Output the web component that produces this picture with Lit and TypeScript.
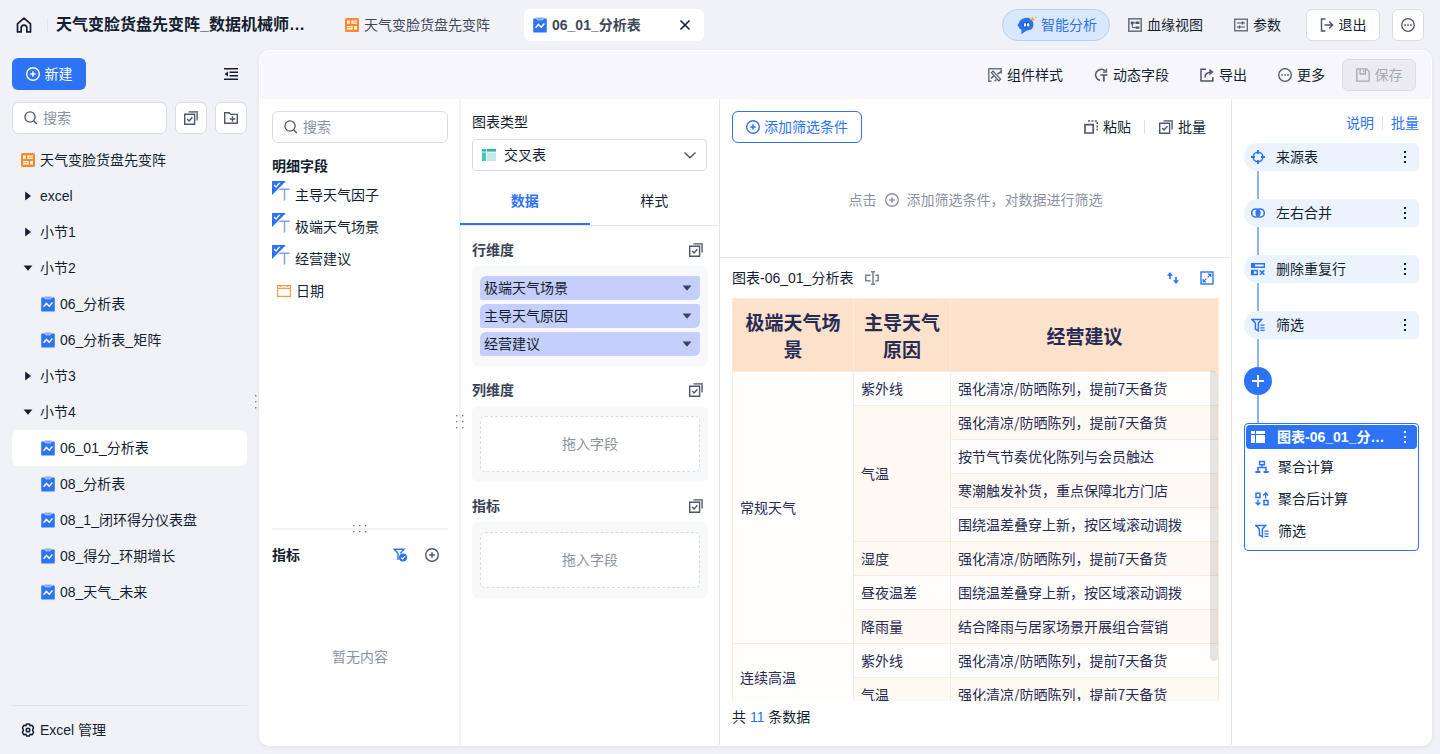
import { LitElement, html, css, svg, nothing } from "lit";
import { customElement, state } from "lit/decorators.js";
import { classMap } from "lit/directives/class-map.js";

const shapes: Record<string, unknown> = {
  home: svg`<path d="M1.3 6 L7 1 L12.7 6 V13 H9.5 V9.6 A2.5 2.5 0 0 0 4.5 9.6 V13 H1.3 Z" fill="none" stroke="currentColor" stroke-width="1.5"/>`,
  plusCircle: svg`<circle cx="7" cy="7" r="6.3" fill="none" stroke="currentColor" stroke-width="1.4"/><path d="M7 4.2V9.8M4.2 7H9.8" stroke="currentColor" stroke-width="1.5"/>`,
  collapse: svg`<path d="M0 1.7H14M5.5 5.3H14M5.5 8.7H14M0 12.3H14" stroke="currentColor" stroke-width="1.6"/><path d="M0.6 7 L4 4.4V9.6Z" fill="currentColor"/>`,
  search: svg`<circle cx="6" cy="6" r="5.1" fill="none" stroke="currentColor" stroke-width="1.3"/><path d="M9.7 9.7L12.8 13" stroke="currentColor" stroke-width="1.4"/>`,
  batch: svg`<path d="M0.7 3.2H10.6V13.3H0.7Z" fill="none" stroke="currentColor" stroke-width="1.4"/><path d="M3.2 8L5.1 10L8.4 6.2" fill="none" stroke="currentColor" stroke-width="1.4"/><path d="M4.5 0.9H13.1V9.5" fill="none" stroke="currentColor" stroke-width="1.8" opacity="0.75"/>`,
  folderPlus: svg`<path d="M0.7 1.7H5.2L6.8 3.4H13.3V12.3H0.7Z" fill="none" stroke="currentColor" stroke-width="1.4"/><path d="M8.5 5.2V10.8M5.7 8H11.3" stroke="currentColor" stroke-width="1.4"/>`,
  book: svg`<rect width="14" height="14" rx="1.5" fill="#fc8a2b"/><path d="M2 2.5H4.8V5.8H2ZM6.4 2.5H12V5.8H6.4ZM2 8H7.6V11.5H2ZM9.2 8H12V11.5H9.2Z" fill="#fff"/><path d="M7.6 4.1H12M2 9.7H6.4" stroke="#fc8a2b" stroke-width="0.9"/>`,
  chartDoc: svg`<rect x="0" y="1.5" width="14" height="14" rx="1" fill="#2d73f5"/><path d="M0.3 2V15.5M13.7 2V15.5" stroke="#8fb4fa" stroke-width="0.6"/><path d="M3.6 0.6H10.4L9.6 3H4.4Z" fill="#79a5f8" stroke="#c4d8fc" stroke-width="0.7"/><path d="M2.6 10.8L5.4 7.4L8.2 10.2L11.4 6.6" fill="none" stroke="#fff" stroke-width="1.5"/>`,
  caretRight: svg`<path d="M4.2 2.6L10 7L4.2 11.4Z" fill="currentColor"/>`,
  caretDown: svg`<path d="M2.6 4.4H11.4L7 9.8Z" fill="currentColor"/>`,
  gear: svg`<path d="M5.6 1H8.4L9 2.7L11 2.3L12.6 4.6L11.6 7L12.6 9.4L11 11.7L9 11.3L8.4 13H5.6L5 11.3L3 11.7L1.4 9.4L2.4 7L1.4 4.6L3 2.3L5 2.7Z" fill="none" stroke="currentColor" stroke-width="1.5" stroke-linejoin="round"/><circle cx="7" cy="7" r="1.8" fill="none" stroke="currentColor" stroke-width="1.5"/>`,
  close: svg`<path d="M2.5 2.5L11.5 11.5M11.5 2.5L2.5 11.5" stroke="currentColor" stroke-width="1.6"/>`,
  lineage: svg`<rect x="0.8" y="0.8" width="12.4" height="12.4" fill="none" stroke="currentColor" stroke-width="1.6" opacity="0.8"/><path d="M2.8 3.6H5.6V6.2H2.8ZM7.8 3.6H11.4V6H7.8ZM7.8 8.4H11.4V10.8H7.8Z" fill="currentColor"/><path d="M5 4.9H8M4.3 5V9.6H8" fill="none" stroke="currentColor" stroke-width="1"/>`,
  params: svg`<rect x="0.7" y="1.2" width="12.6" height="11.6" fill="none" stroke="currentColor" stroke-width="1.4" opacity="0.85"/><path d="M3 5H11M3 9H11" stroke="currentColor" stroke-width="1.2"/><path d="M8.5 3.5V6.5M5.5 7.5V10.5" stroke="currentColor" stroke-width="1.5"/>`,
  exit: svg`<path d="M5.5 1H1.5V13H5.5" fill="none" stroke="currentColor" stroke-width="1.4"/><path d="M4.5 7H12.5M9.2 3.5L12.7 7L9.2 10.5" fill="none" stroke="currentColor" stroke-width="1.4"/>`,
  more: svg`<circle cx="7" cy="7" r="6.3" fill="none" stroke="currentColor" stroke-width="1.3"/><path d="M3.2 6.3H4.8V7.7H3.2ZM6.2 6.3H7.8V7.7H6.2ZM9.2 6.3H10.8V7.7H9.2Z" fill="currentColor"/>`,
  style: svg`<path d="M13.2 5.5V0.8H0.8V13.2H3.6" fill="none" stroke="currentColor" stroke-width="1.5" opacity="0.8"/><path d="M3.4 4.6L5 3L12.6 11.2L10.8 12.8Z" fill="none" stroke="currentColor" stroke-width="1.2"/><path d="M3 10.6L6 7.6M9.4 6.2L13 3.6M6.6 13.2L8.4 11.6" stroke="currentColor" stroke-width="1.4"/>`,
  dynamic: svg`<path d="M11.2 3A5.6 5.6 0 1 0 6 12.4" fill="none" stroke="currentColor" stroke-width="1.5"/><path d="M12.4 0.8V4.2H8.8" fill="none" stroke="currentColor" stroke-width="1.3"/><path d="M6.4 7H13.4M9.9 7V13.6" stroke="currentColor" stroke-width="1.7"/>`,
  exportIcon: svg`<path d="M6 1.2H1V13H12.8V9" fill="none" stroke="currentColor" stroke-width="1.5"/><path d="M5 9.5C5 6 7 4.2 11 4.2" fill="none" stroke="currentColor" stroke-width="1.6"/><path d="M9.4 0.8L13.5 4.1L9.4 7.4Z" fill="currentColor"/>`,
  save: svg`<path d="M0.8 0.8H10.4L13.2 3.6V13.2H0.8Z" fill="none" stroke="currentColor" stroke-width="1.3"/><path d="M4 1V6H9.5V1M7.6 2.2V4.6" fill="none" stroke="currentColor" stroke-width="1.3"/>`,
  cross: svg`<rect x="0" y="1" width="14" height="2.6" fill="#27b5ae"/><rect x="0" y="4.4" width="4" height="8.6" fill="#45c5be"/><rect x="4.8" y="4.4" width="9.2" height="8.6" fill="#bfece9"/><path d="M4.4 1V13" stroke="#fff" stroke-width="0.8"/>`,
  chevron: svg`<path d="M1.5 4.5L7 9.8L12.5 4.5" fill="none" stroke="currentColor" stroke-width="1.4"/>`,
  calendar: svg`<path d="M0.6 1.6H13.4V12.4H0.6Z" fill="none" stroke="#fa9a48" stroke-width="1.2"/><path d="M0.6 4.4H13.4M3.5 1V3M10.5 1V3" stroke="#fa9a48" stroke-width="1.2"/>`,
  paste: svg`<path d="M1 4.6H9.2V13H1Z" fill="none" stroke="currentColor" stroke-width="1.7"/><path d="M4 1H13.2V10.5" fill="none" stroke="currentColor" stroke-width="1.5" stroke-dasharray="2 1.4"/>`,
  rename: svg`<path d="M5.5 4.2H0.8V9.8H5.5M10.5 4.2H13.2V9.8H10.5" fill="none" stroke="currentColor" stroke-width="1.5"/><path d="M8 1V13M6 0.8H10M6 13.2H10" stroke="currentColor" stroke-width="1.5"/>`,
  sort: svg`<path d="M4 2.5V8M10 6V11" stroke="currentColor" stroke-width="1.6"/><path d="M1 4.8L4 1L7 4.8ZM7 9.2L10 13L13 9.2Z" fill="currentColor"/>`,
  expand: svg`<rect x="1" y="1" width="12" height="12" fill="none" stroke="currentColor" stroke-width="1.4"/><path d="M7.6 6.4L10.6 3.4M8 3.2H10.8V6M6.4 7.6L3.4 10.6M3.2 8V10.8H6" fill="none" stroke="currentColor" stroke-width="1.2"/>`,
  target: svg`<circle cx="7" cy="7" r="4.8" fill="none" stroke="currentColor" stroke-width="1.5"/><path d="M7 0V4M7 10V14M0 7H4M10 7H14" stroke="currentColor" stroke-width="1.9"/>`,
  merge: svg`<circle cx="4.8" cy="7" r="4.1" fill="none" stroke="currentColor" stroke-width="1.5"/><circle cx="9.2" cy="7" r="4.1" fill="none" stroke="currentColor" stroke-width="1.5"/><path d="M7 3.7A4 4 0 0 1 7 10.3A4 4 0 0 1 7 3.7Z" fill="currentColor"/>`,
  dedupe: svg`<path d="M0.7 1.7H13.3V5.3H0.7ZM0.7 8.6H6.3V12.4H0.7Z" fill="none" stroke="currentColor" stroke-width="1.5"/><path d="M0.6 1.6H4V5.2H0.6ZM0.6 8.6H3V12.4H0.6Z" fill="currentColor"/><path d="M9 8.4L13.3 12.8M13.3 8.4L9 12.8" stroke="currentColor" stroke-width="1.6"/>`,
  filter: svg`<path d="M0.8 1.4H10.6L7.4 5V12.8L4.4 11V5Z" fill="none" stroke="currentColor" stroke-width="1.5"/><path d="M9.4 7.2H13.6M9.4 9.8H13.6M9.4 12.4H13.6" stroke="currentColor" stroke-width="1.3"/>`,
  filterCheck: svg`<path d="M5 12V5.2L1.2 1.2H11L7.4 5.2" fill="none" stroke="currentColor" stroke-width="1.4"/><circle cx="10" cy="9.6" r="4" fill="currentColor"/><path d="M8.2 9.6L9.6 11L12 8.4" fill="none" stroke="#fff" stroke-width="1.1"/>`,
  plus: svg`<path d="M7 1V13M1 7H13" stroke="currentColor" stroke-width="1.8"/>`,
  kebab: svg`<path d="M6 1H8V3H6ZM6 6H8V8H6ZM6 11H8V13H6Z" fill="currentColor"/>`,
  table: svg`<path d="M0 1H4V4H0ZM5 1H14V4H5ZM0 5H4V13H0ZM5 5H14V13H5Z" fill="currentColor"/>`,
  aggregate: svg`<path d="M4.6 1.4H9.4V4.8H4.6ZM7 4.8V7.4M3 11V7.4H11V11" fill="none" stroke="currentColor" stroke-width="1.5"/><path d="M0.4 12H5.4M8.6 12H13.6" stroke="currentColor" stroke-width="2"/>`,
  aggregateAfter: svg`<path d="M1 1.2H5V5.4H1ZM9 8.6H13V12.8H9Z" fill="none" stroke="currentColor" stroke-width="1.5"/><path d="M10.7 6.6V1.2M8.2 3.6L10.7 1L13.2 3.6M3 7.6V12.6M0.6 10.4L3 12.8L5.4 10.4" fill="none" stroke="currentColor" stroke-width="1.4"/>`,
};

const icon = (name: string, size = 14) => html`<svg class="icon" width=${size} height=${name === "chartDoc" ? 16 : size}
  viewBox=${name === "chartDoc" ? "0 0 14 16" : "0 0 14 14"} aria-hidden="true">${shapes[name]}</svg>`;

const robot = html`<svg class="icon" width="20" height="18" viewBox="0 0 20 18" aria-hidden="true">
  <path d="M8 2C12.5 1.2 16.4 3.8 16.4 8.4C16.4 12.4 14 14 11 14.2C8.5 15 6.5 17 4 18C4.6 16.4 4.6 15 4.2 13.6C2.6 13 1.8 12 2 10.8C0.4 10.6 0 8.4 1.6 7.8C2 4.6 4.6 2.6 8 2Z" fill="#2b74f0"/>
  <ellipse cx="9.4" cy="8.8" rx="3.9" ry="2.8" fill="#1f57bd"/>
  <ellipse cx="8" cy="8.8" rx="1.2" ry="1.9" fill="#fff"/><ellipse cx="11.2" cy="8.8" rx="1.2" ry="1.9" fill="#fff"/>
  <path d="M15.4 0.6L16.3 2.6L18.2 3.4L16.3 4.2L15.4 6.2L14.6 4.2L12.7 3.4L14.6 2.6Z" fill="#f9a825"/>
  <path d="M18.8 0L19.2 1L20 1.3L19.2 1.7L18.8 2.6L18.4 1.7L17.6 1.3L18.4 1Z" fill="#f9a825"/></svg>`;

const checkedText = html`<svg class="icon" width="18" height="20" viewBox="0 0 18 20" aria-hidden="true">
  <path d="M0 0H14L0 14Z" fill="#2d73f5"/><path d="M2 4L4 6L7.6 1.8" fill="none" stroke="#fff" stroke-width="1.3"/>
  <path d="M7.5 8.2H17.5M12.5 8V19.5" stroke="#84a3dc" stroke-width="1.5"/></svg>`;

interface TreeNode { label: string; kind: "book" | "closed" | "open" | "chart"; }

const tree: TreeNode[] = [
  { label: "天气变脸货盘先变阵", kind: "book" },
  { label: "excel", kind: "closed" },
  { label: "小节1", kind: "closed" },
  { label: "小节2", kind: "open" },
  { label: "06_分析表", kind: "chart" },
  { label: "06_分析表_矩阵", kind: "chart" },
  { label: "小节3", kind: "closed" },
  { label: "小节4", kind: "open" },
  { label: "06_01_分析表", kind: "chart" },
  { label: "08_分析表", kind: "chart" },
  { label: "08_1_闭环得分仪表盘", kind: "chart" },
  { label: "08_得分_环期增长", kind: "chart" },
  { label: "08_天气_未来", kind: "chart" },
];
const treeIcon = { book: "book", closed: "caretRight", open: "caretDown", chart: "chartDoc" };

type Cell = [text: string, span?: number];
const rows: Cell[][] = [
  [["常规天气", 8], ["紫外线"], ["强化清凉/防晒陈列，提前7天备货"]],
  [["气温", 4], ["强化清凉/防晒陈列，提前7天备货"]],
  [["按节气节奏优化陈列与会员触达"]],
  [["寒潮触发补货，重点保障北方门店"]],
  [["围绕温差叠穿上新，按区域滚动调拨"]],
  [["湿度"], ["强化清凉/防晒陈列，提前7天备货"]],
  [["昼夜温差"], ["围绕温差叠穿上新，按区域滚动调拨"]],
  [["降雨量"], ["结合降雨与居家场景开展组合营销"]],
  [["连续高温", 2], ["紫外线"], ["强化清凉/防晒陈列，提前7天备货"]],
  [["气温"], ["强化清凉/防晒陈列，提前7天备货"]],
];

const steps = [
  { icon: "target", label: "来源表" },
  { icon: "merge", label: "左右合并" },
  { icon: "dedupe", label: "删除重复行" },
  { icon: "filter", label: "筛选" },
];

@customElement("app-root")
export class AppRoot extends LitElement {
  @state() private selected = "06_01_分析表";
  @state() private tab = "数据";

  static styles = css`
    :host {
      display: flex; flex-direction: column; height: 100vh; overflow: hidden;
      background: #f1f2f7; color: #141e31;
      font: 14px/22px "Liberation Sans", "Noto Sans CJK SC", sans-serif;
    }
    *, *::before, *::after { box-sizing: border-box; }
    button, input, select { font: inherit; color: inherit; }
    button { display: inline-flex; align-items: center; background: none; border: 0; padding: 0; white-space: nowrap; cursor: pointer; }
    ul { list-style: none; margin: 0; padding: 0; }
    h1, h2, p { margin: 0; font-size: inherit; }
    a { color: #2d73f5; text-decoration: none; }
    .icon { display: block; flex: none; }
    .grey { color: #4e5669; }
    .blue { color: #2d73f5; }
    .grow { flex: 1; }
    .link { gap: 5px; }
    .link .icon { color: #4e5669; }
    .box { height: 32px; background: #fff; border: 1px solid #d9dde5; border-radius: 6px; justify-content: center; color: #4e5669; flex: none; }
    .square { width: 32px; }
    .labelled { width: 74px; gap: 5px; color: #141e31; }
    .labelled .icon { color: #4e5669; }
    .rule { width: 1px; height: 14px; background: #dfe2e8; flex: none; }

    header { display: flex; align-items: center; height: 50px; flex: none; padding: 0 16px; }
    header h1 { font-size: 16px; line-height: 24px; width: 268px; padding: 0 8px; overflow: hidden; white-space: nowrap; }
    header .rule { margin-left: 15px; background: #e3e5eb; }
    .doc-tab { gap: 5px; color: #3f4859; padding: 0 29px; }
    .doc-tab.current { height: 32px; width: 180px; margin-left: 5px; padding: 0 12px 0 9px; background: #fff; border-radius: 6px; font-weight: bold; display: flex; align-items: center; }
    .doc-tab.current button { margin-left: auto; color: #141e31; }
    .actions { display: flex; align-items: center; }
    .smart { height: 32px; width: 108px; padding-left: 14px; gap: 4px; color: #2d73f5; background: #dae8ff; border: 1px solid #b5cffb; border-radius: 16px; }
    .smart + .link { margin: 0 31px 0 18px; }
    .actions .labelled { margin: 0 12px 0 25px; }

    .body { display: flex; flex: 1; min-height: 0; padding: 0 8px 8px 0; position: relative; }
    aside { display: flex; flex-direction: column; width: 259px; padding: 8px 12px 0; flex: none; }
    .aside-head { display: flex; justify-content: space-between; align-items: center; padding-right: 9px; }
    .create { height: 32px; width: 74px; justify-content: center; gap: 5px; background: #2d73f5; color: #fff; border-radius: 6px; }
    .finder { display: flex; gap: 8px; margin: 12px 0 8px; }
    .search { display: flex; align-items: center; gap: 5px; flex: 1; min-width: 0; padding: 0 11px; color: #4e5669; }
    .search input { border: 0; outline: 0; background: none; padding: 0; min-width: 0; flex: 1; height: 22px; line-height: 22px; color: #141e31; }
    .search input::placeholder { color: #8c93a0; opacity: 1; }
    .tree button { width: 100%; height: 36px; border-radius: 6px; padding-left: 9px; gap: 5px; }
    .tree .chart { padding-left: 29px; }
    .tree .on { background: #fff; }
    .aside-foot { margin-top: auto; border-top: 1px solid #e3e5eb; padding: 13px 9px 2px; height: 41px; }
    .aside-foot button { gap: 5px; }

    .panel { flex: 1; min-width: 0; display: flex; flex-direction: column; background: #fff; border: 1px solid #fff; border-radius: 10px; box-shadow: 0 1px 4px rgba(30, 50, 90, 0.08); overflow: hidden; position: relative; }
    .toolbar { display: flex; align-items: center; justify-content: flex-end; height: 48px; flex: none; background: #f6f6fb; padding-right: 15px; }
    .toolbar .link { margin-left: 31px; }
    .toolbar .save { margin-left: 17px; background: #ececf0; color: #a5a9b2; }
    .toolbar .save .icon { color: #a5a9b2; }
    .columns { display: flex; flex: 1; min-height: 0; }

    .fields { width: 200px; flex: none; display: flex; flex-direction: column; border-right: 1px solid #f1f2f4; padding: 12px 11px 0 12px; }
    .fields .search { flex: none; }
    .fields h2 { margin-top: 12px; }
    .fields li { display: flex; align-items: center; height: 32px; gap: 5px; }
    .fields li.date { padding-left: 5px; }
    .field-list { flex: 1; }
    .field-list ul { margin-top: 2px; }
    .field-list .icon { margin-bottom: 9px; }
    .field-list .date .icon { margin: 0; }
    .split { display: flex; align-items: center; justify-content: center; height: 14px; background: linear-gradient(#f0f1f4, #f0f1f4) center / 100% 2px no-repeat; color: #777d89; }
    .measures { height: 209px; display: flex; flex-direction: column; }
    .measures-head { display: flex; align-items: center; gap: 18px; padding: 8px 9px 0 0; }
    .measures-head h2 { margin: 0; flex: 1; }
    .none { flex: 1; display: flex; align-items: center; justify-content: center; padding-top: 2px; color: #8c93a0; }

    .config { width: 260px; flex: none; border-left: 1px solid #f1f2f4; border-right: 1px solid #e5e7ea; padding-top: 12px; }
    .chart-type { padding: 0 12px 0 11px; display: block; }
    .picker { display: grid; align-items: center; margin-top: 6px; }
    .picker > * { grid-area: 1 / 1; }
    .picker select { appearance: none; height: 32px; width: 100%; border: 1px solid #d9dde5; border-radius: 4px; background: #fff; padding: 0 31px; }
    .picker .icon { pointer-events: none; z-index: 1; margin-left: 10px; }
    .picker .grey .icon { margin: 0 10px 0 0; }
    .picker .grey { justify-self: end; pointer-events: none; z-index: 1; }
    .tabs { display: flex; margin: 8px 0 0 -1px; height: 47px; border-bottom: 1px solid #e5e7ea; }
    .tabs button { flex: 1; justify-content: center; height: 46px; border-bottom: 2px solid transparent; }
    .tabs .on { color: #2d73f5; font-weight: bold; border-color: #2d73f5; }
    .shelf { padding: 13px 11px 0; }
    .shelf-head { display: flex; align-items: center; justify-content: space-between; padding-right: 5px; height: 22px; color: #3a4356; }
    .shelf-head button { color: #4e5669; }
    .well { margin-top: 5px; background: #f7f8fa; border-radius: 6px; padding: 10px 8px; display: flex; flex-direction: column; gap: 4px; }
    .chip { height: 24px; justify-content: space-between; padding: 0 6px 0 4px; background: #c4cffb; border-radius: 6px 2px 6px 2px; width: 100%; }
    .chip .icon { color: #36435e; }
    .drop { height: 56px; border: 1px dashed #d9dce2; border-radius: 5px; background: #fff; color: #8c93a0; display: flex; align-items: center; justify-content: center; }

    .data { flex: 1; min-width: 0; display: flex; flex-direction: column; padding: 0 12px; }
    .filters { height: 159px; flex: none; margin: 0 -12px; padding: 12px 12px 0; border-bottom: 1px solid #e5e7ea; }
    .filters-head { display: flex; align-items: center; }
    .add { height: 32px; padding: 0 13px; gap: 4px; border: 1px solid #2d73f5; border-radius: 6px; color: #2d73f5; }
    .filters-head .rule { margin: 0 14px 0 13px; }
    .filters-head .link:last-child { margin-right: 13px; }
    .hint { display: flex; align-items: center; justify-content: center; gap: 8px; margin-top: 46px; color: #8c93a0; }
    .view-head { display: flex; align-items: center; height: 40px; flex: none; gap: 12px; }
    .view-head .tools { margin-left: auto; display: flex; gap: 20px; padding-right: 5px; }
    .view-head .grey { opacity: 0.75; }
    .sheet { flex: 1; min-height: 0; overflow: hidden; position: relative; }
    table { width: 100%; border-collapse: collapse; table-layout: fixed; color: #272b54; font-family: "Noto Sans CJK SC", sans-serif; }
    th { background: #fce2cb; border: 1px solid #fdeadb; font-size: 19px; line-height: 27px; height: 73px; padding: 9px 7px; }
    td { height: 34px; padding: 0 7px 2px; border: 1px solid #fdeadb; background: #fffefd; line-height: 22px; white-space: nowrap; }
    tr:nth-child(even) td { background: #fff9f3; }
    .first { width: 121px; }
    .second { width: 97px; }
    .thumb { position: absolute; right: 1px; top: 73px; width: 8px; height: 72%; background: rgba(0, 0, 0, 0.1); border-radius: 0 4px 4px 4px; }
    .total { height: 44px; flex: none; padding-top: 5px; }

    .flow { width: 200px; flex: none; border-left: 1px solid #e5e7ea; padding: 13px 12px 0; }
    .flow-head { display: flex; justify-content: flex-end; align-items: center; gap: 8px; margin-bottom: 9px; }
    .step { display: flex; align-items: center; height: 28px; padding: 0 7px; gap: 11px; background: #ebf3ff; border-radius: 14px 6px 6px 14px; }
    .step .blue + span { flex: 1; }
    .wire { width: 2px; height: 28px; margin-left: 13px; background: #8fb2f8; }
    .insert { width: 28px; height: 28px; border-radius: 50%; background: #2d73f5; color: #fff; justify-content: center; }
    .card { border: 1px solid #2d73f5; border-radius: 4px; padding: 1px 1px 3px; }
    .card-head { display: flex; align-items: center; gap: 12px; height: 24px; padding: 0 5px; background: #2d73f5; color: #fff; border-radius: 4px; font-weight: bold; }
    .card-head span { flex: 1; white-space: nowrap; }
    .card li { display: flex; align-items: center; height: 32px; padding-left: 9px; gap: 9px; }
    .card ul { margin-top: 2px; }

    .grip { position: absolute; color: #777d89; }
    .grip-right { left: 196px; top: 364px; }
    .grip-left { left: 255px; top: 345px; }
  `;

  private dots(cols: number, rowCount: number) {
    const points = Array.from({ length: cols * rowCount }, (_, i) => [i % cols, Math.floor(i / cols)]);
    return html`<svg class="icon" width=${(cols - 1) * 6 + 2} height=${(rowCount - 1) * 6 + 2} aria-hidden="true">
      ${points.map(([x, y]) => svg`<rect x=${x * 6} y=${y * 6} width="1.4" height="1.4" fill="currentColor"/>`)}</svg>`;
  }

  private search(id: string) {
    return html`<label class="box search" for=${id}>${icon("search")}<input id=${id} type="text" placeholder="搜索" aria-label="搜索"></label>`;
  }

  private link(name: string, text: string) {
    return html`<button class="link">${icon(name)}${text}</button>`;
  }

  private shelf(title: string, chips: string[]) {
    return html`<section class="shelf">
      <div class="shelf-head"><h2>${title}</h2><button aria-label="批量${title}">${icon("batch")}</button></div>
      <div class="well">
        ${chips.length
          ? chips.map((c) => html`<button class="chip">${c}${icon("caretDown")}</button>`)
          : html`<div class="drop">拖入字段</div>`}
      </div>
    </section>`;
  }

  private header() {
    return html`<header>
      <button aria-label="主页">${icon("home", 16)}</button>
      <span class="rule"></span>
      <h1>天气变脸货盘先变阵_数据机械师…</h1>
      <button class="doc-tab">${icon("book")}天气变脸货盘先变阵</button>
      <div class="doc-tab current">${icon("chartDoc")}06_01_分析表<button aria-label="关闭">${icon("close")}</button></div>
      <span class="grow"></span>
      <div class="actions">
        <button class="smart">${robot}智能分析</button>
        ${this.link("lineage", "血缘视图")}
        ${this.link("params", "参数")}
        <button class="box labelled">${icon("exit")}退出</button>
        <button class="box square" aria-label="更多操作">${icon("more")}</button>
      </div>
    </header>`;
  }

  private sidebar() {
    return html`<aside>
      <div class="aside-head">
        <button class="create">${icon("plusCircle")}新建</button>
        <button aria-label="收起">${icon("collapse")}</button>
      </div>
      <div class="finder">
        ${this.search("tree-search")}
        <button class="box square" aria-label="批量选择">${icon("batch")}</button>
        <button class="box square" aria-label="新建文件夹">${icon("folderPlus")}</button>
      </div>
      <ul class="tree">
        ${tree.map((n) => html`<li><button class=${classMap({ [n.kind]: true, on: n.label === this.selected })}
          @click=${() => (this.selected = n.label)}>${icon(treeIcon[n.kind])}${n.label}</button></li>`)}
      </ul>
      <div class="aside-foot"><button>${icon("gear")}Excel 管理</button></div>
    </aside>`;
  }

  private fields() {
    return html`<section class="fields">
      ${this.search("field-search")}
      <div class="field-list">
        <h2>明细字段</h2>
        <ul>
          ${["主导天气因子", "极端天气场景", "经营建议"].map((f) => html`<li>${checkedText}${f}</li>`)}
          <li class="date">${icon("calendar")}日期</li>
        </ul>
      </div>
      <div class="split">${this.dots(3, 2)}</div>
      <div class="measures">
        <div class="measures-head"><h2>指标</h2>
          <button class="blue" aria-label="筛选指标">${icon("filterCheck")}</button>
          <button class="grey" aria-label="新增指标">${icon("plusCircle")}</button>
        </div>
        <div class="none">暂无内容</div>
      </div>
    </section>`;
  }

  private config() {
    return html`<section class="config">
      <div class="chart-type">
        <label for="chart-type">图表类型</label>
        <div class="picker">
          <select id="chart-type"><option>交叉表</option></select>
          ${icon("cross")}<span class="grey">${icon("chevron")}</span>
        </div>
      </div>
      <div class="tabs" role="tablist">
        ${["数据", "样式"].map((t) => html`<button role="tab" aria-selected=${t === this.tab} class=${classMap({ on: t === this.tab })}
          @click=${() => (this.tab = t)}>${t}</button>`)}
      </div>
      ${this.shelf("行维度", ["极端天气场景", "主导天气原因", "经营建议"])}
      ${this.shelf("列维度", [])}
      ${this.shelf("指标", [])}
    </section>`;
  }

  private data() {
    return html`<section class="data">
      <div class="filters">
        <div class="filters-head">
          <button class="add">${icon("plusCircle")}添加筛选条件</button>
          <span class="grow"></span>
          ${this.link("paste", "粘贴")}<span class="rule"></span>${this.link("batch", "批量")}
        </div>
        <p class="hint">点击 ${icon("plusCircle")} 添加筛选条件，对数据进行筛选</p>
      </div>
      <div class="view-head">
        图表-06_01_分析表
        <button class="grey" aria-label="重命名">${icon("rename")}</button>
        <div class="tools blue">
          <button class="blue" aria-label="排序">${icon("sort")}</button>
          <button class="blue" aria-label="全屏">${icon("expand")}</button>
        </div>
      </div>
      <div class="sheet">
        <table>
          <colgroup><col class="first"><col class="second"><col></colgroup>
          <thead><tr><th>极端天气场景</th><th>主导天气原因</th><th>经营建议</th></tr></thead>
          <tbody>${rows.map((r) => html`<tr>${r.map(([text, span]) => html`<td rowspan=${span ?? nothing}>${text}</td>`)}</tr>`)}</tbody>
        </table>
        <div class="thumb"></div>
      </div>
      <div class="total">共 <span class="blue">11</span> 条数据</div>
    </section>`;
  }

  private flow() {
    return html`<section class="flow">
      <div class="flow-head"><a href="#help">说明</a><span class="rule"></span><a href="#batch">批量</a></div>
      ${steps.map((s) => html`<div class="step"><span class="blue">${icon(s.icon)}</span><span>${s.label}</span>
        <button aria-label="${s.label}操作">${icon("kebab")}</button></div><div class="wire"></div>`)}
      <button class="insert" aria-label="添加步骤">${icon("plus")}</button>
      <div class="wire"></div>
      <div class="card">
        <div class="card-head">${icon("table")}<span>图表-06_01_分…</span><button aria-label="图表操作">${icon("kebab")}</button></div>
        <ul>
          <li><span class="blue">${icon("aggregate")}</span>聚合计算</li>
          <li><span class="blue">${icon("aggregateAfter")}</span>聚合后计算</li>
          <li><span class="blue">${icon("filter")}</span>筛选</li>
        </ul>
      </div>
    </section>`;
  }

  render() {
    return html`${this.header()}
      <div class="body">
        ${this.sidebar()}
        <main class="panel">
          <div class="toolbar">
            ${this.link("style", "组件样式")}${this.link("dynamic", "动态字段")}${this.link("exportIcon", "导出")}${this.link("more", "更多")}
            <button class="box labelled save" disabled>${icon("save")}保存</button>
          </div>
          <div class="columns">${this.fields()}${this.config()}${this.data()}${this.flow()}</div>
          <span class="grip grip-right">${this.dots(2, 3)}</span>
        </main>
        <span class="grip grip-left">${this.dots(1, 3)}</span>
      </div>`;
  }
}
